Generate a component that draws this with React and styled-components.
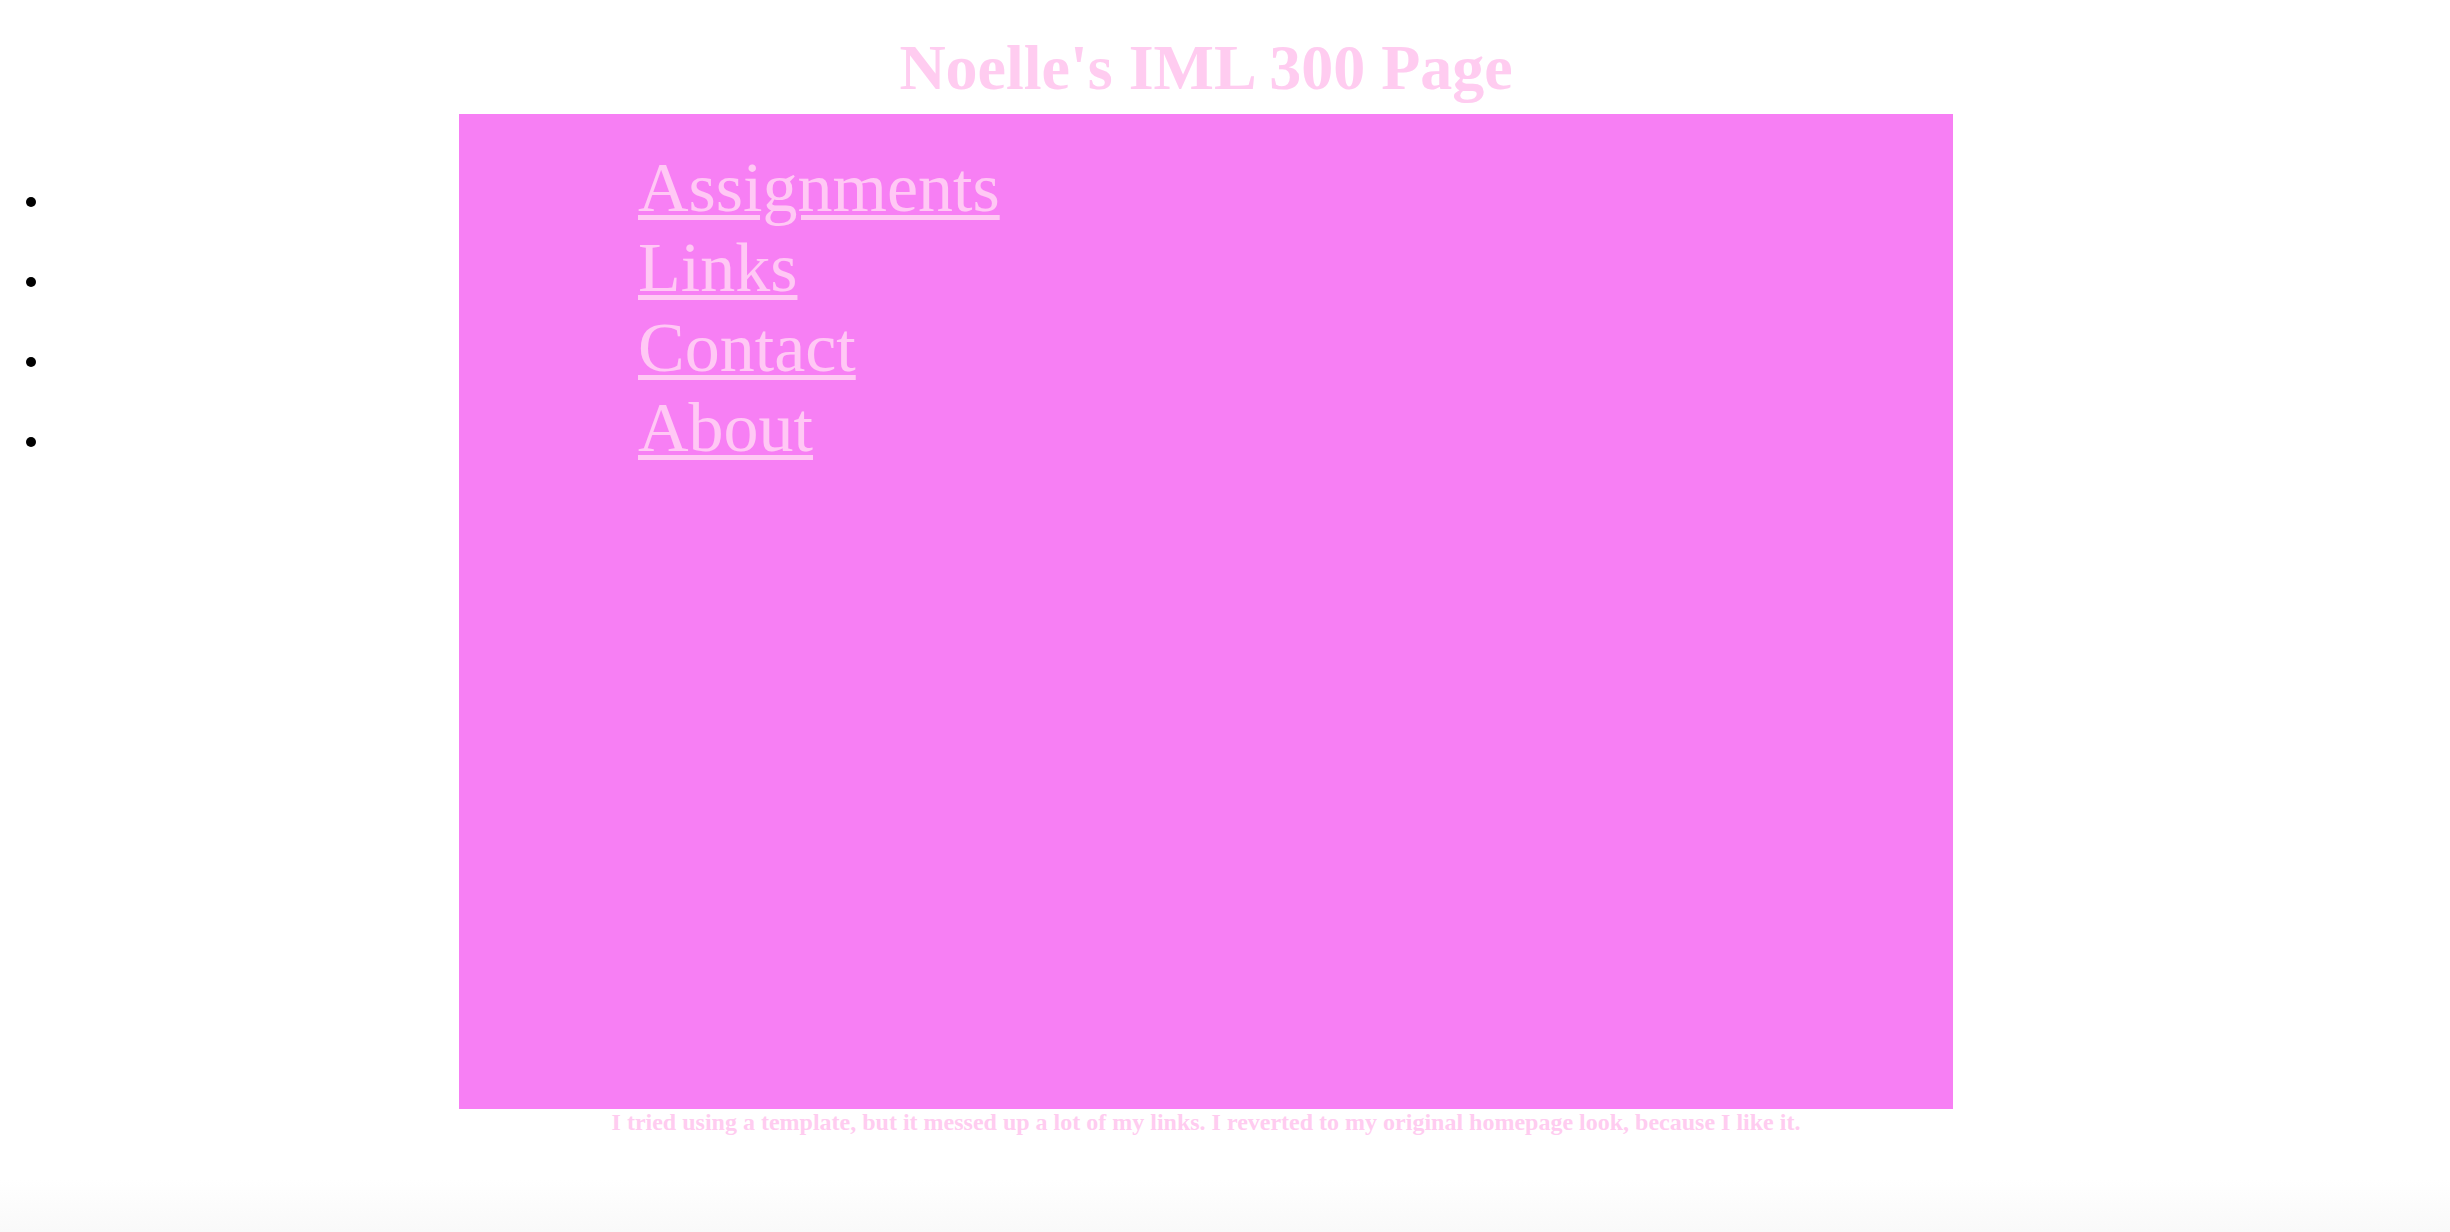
import styled, { createGlobalStyle } from "styled-components";

const GlobalStyle = createGlobalStyle`
  html {
    min-height: 100%;
  }
  body {
    margin: 0;
    min-height: 100vh;
    background: linear-gradient(to bottom, #ffffff calc(100% - 52px), #f9f9f9 100%);
    font-family: "Liberation Serif", "Times New Roman", serif;
  }
`;

const Page = styled.div`
  padding: 31px 0 0 459px;
`;

const Column = styled.div`
  width: 1494px;
`;

const Title = styled.h1`
  margin: 0;
  font-size: 64px;
  line-height: 74px;
  font-weight: bold;
  text-align: center;
  color: #ffccf0;
`;

const Panel = styled.div`
  box-sizing: border-box;
  margin-top: 9px;
  height: 995px;
  padding-top: 34px;
  background: #f77ff4;
`;

const NavList = styled.ul`
  margin: 0 0 0 -451px;
  padding-left: 44px;
  list-style: disc outside;

  li {
    height: 80px;
    font-size: 32px;
    line-height: 80px;
    color: #000;
  }
`;

const NavLink = styled.a`
  margin-left: 586px;
  font-size: 70px;
  color: #ffc8f4;
  text-decoration: underline;
  text-decoration-thickness: 5px;
  text-underline-offset: 4px;
  cursor: pointer;
`;

const Note = styled.p`
  margin: 0;
  font-size: 24px;
  font-weight: bold;
  text-align: center;
  color: #ffccf0;
`;

const links = ["Assignments", "Links", "Contact", "About"];

const App = () => {
  return (
    <>
      <GlobalStyle />
      <Page>
        <Column>
          <Title>Noelle's IML 300 Page</Title>
          <Panel>
            <NavList>
              {links.map((label) => (
                <li key={label}>
                  <NavLink href="#">{label}</NavLink>
                </li>
              ))}
            </NavList>
          </Panel>
          <Note>
            I tried using a template, but it messed up a lot of my links. I
            reverted to my original homepage look, because I like it.
          </Note>
        </Column>
      </Page>
    </>
  );
};

export default App;
